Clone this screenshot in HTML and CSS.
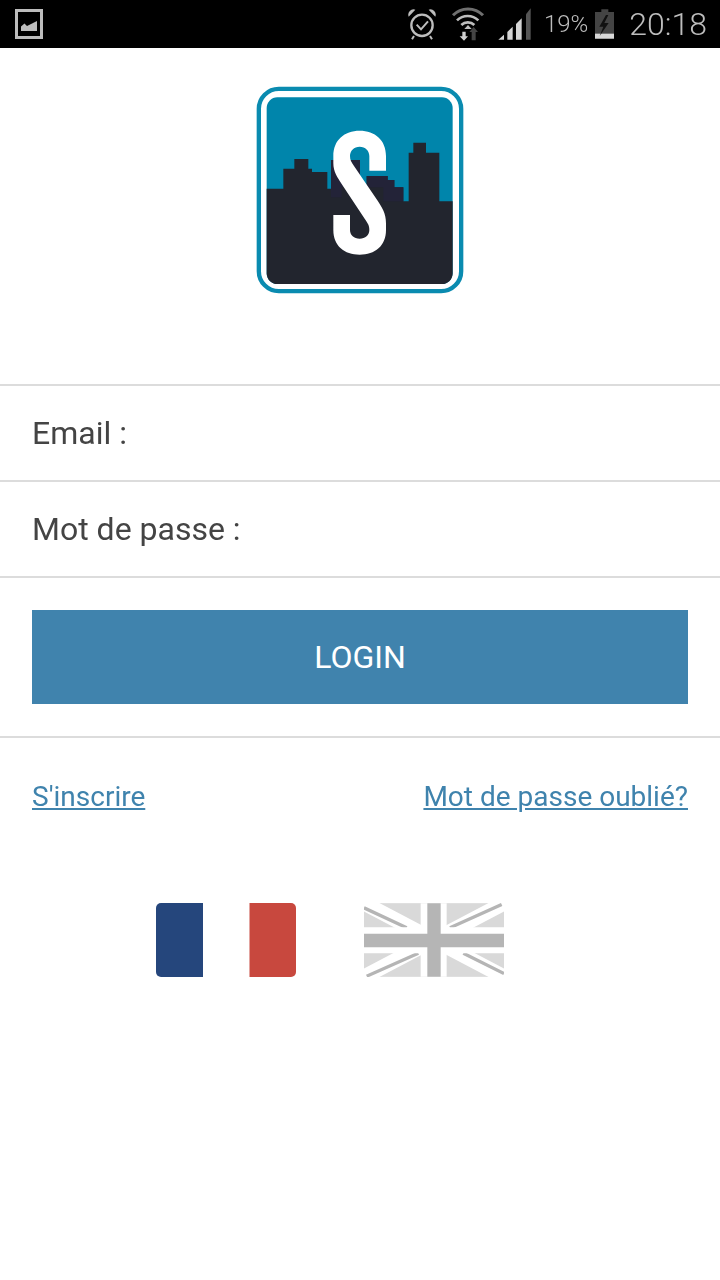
FILE: index.html
```html
<!DOCTYPE html>
<html lang="fr">
<head>
<meta charset="utf-8">
<title>Login</title>
<link rel="stylesheet" href="styles.css">
</head>
<body>
<div class="status">
  <svg class="st-img" viewBox="0 0 28 30" width="28" height="30">
    <rect x="1.5" y="1.5" width="25" height="27" fill="none" stroke="#bdbdbd" stroke-width="3"/>
    <path d="M6 22V17.5L9.5 14.5L12 17L19 13.5L22 12V22Z" fill="#bdbdbd"/>
  </svg>
  <div class="st-right">
    <svg class="st-alarm" viewBox="24 24 90 96" width="30" height="32">
      <circle cx="66" cy="76" r="32" fill="none" stroke="#bdbdbd" stroke-width="7"/>
      <path d="M50 74L63 88L84 64" fill="none" stroke="#bdbdbd" stroke-width="6"/>
      <path d="M26 50A16 16 0 0 1 46 29Z M86 29A16 16 0 0 1 106 50Z" fill="#bdbdbd"/>
      <path d="M42 108L36 118M90 108L96 118" stroke="#bdbdbd" stroke-width="6"/>
    </svg>
    <svg class="st-wifi" viewBox="154 22 102 102" width="34" height="34">
      <path d="M160 47A62 62 0 0 1 250 47" fill="none" stroke="#6f6f6f" stroke-width="9"/>
      <path d="M172 62A46 46 0 0 1 236 62" fill="none" stroke="#bdbdbd" stroke-width="8"/>
      <path d="M185 76A28 28 0 0 1 224 76" fill="none" stroke="#bdbdbd" stroke-width="8"/>
      <path d="M194 88L205 76L216 88" fill="#bdbdbd"/>
      <path d="M188 96H198V110H205L193 123L180 110H188Z" fill="#d0d0d0"/>
      <path d="M222 82L235 97H228V122H216V97H209Z" fill="#444"/>
    </svg>
    <svg class="st-signal" viewBox="294 24 102 96" width="34" height="32">
      <path d="M295 119L312 104V119Z" fill="#d4d4d4"/>
      <path d="M322 96L338 80V119H322Z" fill="#d4d4d4"/>
      <path d="M348 72L365 55V119H348Z" fill="#d4d4d4"/>
      <path d="M378 43L392 25V119H378Z" fill="#555"/>
    </svg>
    <span class="st-pct">19%</span>
    <svg class="st-batt" viewBox="584 24 60 90" width="20" height="30">
      <path d="M603 25H624V33H641V113H584V33H603Z" fill="#444"/>
      <rect x="584" y="98" width="57" height="15" fill="#d8d8d8"/>
      <path d="M617 42L597 77H609L598 105L625 66H612L624 42Z" fill="#111"/>
    </svg>
    <span class="st-time">20:18</span>
  </div>
</div>

<div class="logo-wrap">
  <svg class="logo" viewBox="18 18 624 624" width="208" height="208">
    <rect x="26.500" y="26.500" width="607" height="607" rx="60" fill="#fff" stroke="#0a8bb0" stroke-width="13"/>
    <rect x="50" y="52" width="558" height="560" rx="32" fill="#0085ab"/>
    <path d="M50 326H100V266H133V237H175V266H186V276H232V326H243V240H330V320H350V288H413V300H433V322H460V364H476V218H490V188H528V218H568V364H608V580A32 32 0 0 1 576 612H82A32 32 0 0 1 50 580Z" fill="#22252e"/>
    <path d="M243 240H330V320H275V352H243Z M350 288H413V300H433V322H460V364H400V322H350Z" fill="#232338"/>
    <path d="M408 272V228C408 180 375 152 329 152C283 152 250 180 250 228V250C250 275 262 292 275 312L345 418C354 432 358 436 358 450C358 465 346 476 329 476C312 476 300 465 300 450V405H250V450C250 498 283 524 329 524C375 524 408 498 408 450V430C408 400 396 382 383 362L312 258C304 246 300 240 300 228C300 212 312 200 329 200C346 200 358 212 358 228V272Z" fill="#fff"/>
  </svg>
</div>

<div class="field">Email :</div>
<div class="field">Mot de passe :</div>

<div class="action">
  <button class="login" type="button">LOGIN</button>
</div>

<div class="links">
  <a class="link" href="#">S'inscrire</a>
  <a class="link" href="#">Mot de passe oublié?</a>
</div>

<div class="flags">
  <svg class="flag" viewBox="0 0 140 74" width="140" height="74">
    <path d="M47 0H5A5 5 0 0 0 0 5V69A5 5 0 0 0 5 74H47Z" fill="#25467c"/>
    <path d="M93.500 0H135A5 5 0 0 1 140 5V69A5 5 0 0 1 135 74H93.500Z" fill="#c8483e"/>
  </svg>
  <svg class="flag" viewBox="642 24 420 221" width="140" height="74">
    <rect x="642" y="24" width="420" height="221" fill="#d9d9d9"/>
    <path d="M642 24L1062 245M1062 24L642 245" stroke="#fff" stroke-width="44"/>
    <path d="M642 38L770 98M1055 28L900 98M650 243L805 174M940 174L1062 235" stroke="#b5b5b5" stroke-width="10"/>
    <path d="M812 24H890V96H1062V174H890V245H812V174H642V96H812Z" fill="#fff"/>
    <path d="M832 24H872V116H1062V156H872V245H832V156H642V116H832Z" fill="#b5b5b5"/>
  </svg>
</div>
</body>
</html>
```
FILE: styles.css
```css
* { box-sizing: border-box; }
html, body { margin: 0; padding: 0; }
body {
  width: 720px;
  height: 1280px;
  background: #fff;
  font-family: Roboto, "Liberation Sans", sans-serif;
  overflow: hidden;
}
.status {
  height: 48px;
  background: #000;
  display: flex;
  align-items: center;
  justify-content: space-between;
  padding: 0 13px 0 15px;
}
.status svg { display: block; flex: none; }
.st-right { display: flex; align-items: center; }
.st-alarm { margin-right: 13px; }
.st-wifi { margin-right: 13px; }
.st-signal { margin-right: 12px; }
.st-pct { color: #bdbdbd; font-size: 24px; font-weight: 300; margin-right: 7px; will-change: opacity; }
.st-batt { margin-right: 14px; }
.st-time { color: #bdbdbd; font-size: 32px; font-weight: 300; will-change: opacity; }
.logo-wrap {
  height: 338px;
  padding-top: 38px;
  display: flex;
  justify-content: center;
  align-items: flex-start;
  border-bottom: 2px solid #dcdcdc;
}
.logo { display: block; }
.field {
  height: 96px;
  padding: 0 32px;
  display: flex;
  align-items: center;
  font-size: 32px;
  color: #444;
  border-bottom: 2px solid #dcdcdc;
  will-change: opacity;
}
.action {
  height: 160px;
  padding: 32px 32px 0;
  border-bottom: 2px solid #dcdcdc;
}
.login {
  display: block;
  width: 100%;
  height: 94px;
  border: 0;
  padding: 0;
  background: #4083ad;
  color: #fff;
  font-family: inherit;
  font-size: 32px;
}
.links {
  display: flex;
  justify-content: space-between;
  padding: 41px 32px 0;
  will-change: opacity;
}
.link {
  color: #3f83ad;
  font-size: 28px;
  line-height: 36px;
}
.flags {
  display: flex;
  gap: 68px;
  padding: 88px 0 0 156px;
}
.flag { display: block; }
```
